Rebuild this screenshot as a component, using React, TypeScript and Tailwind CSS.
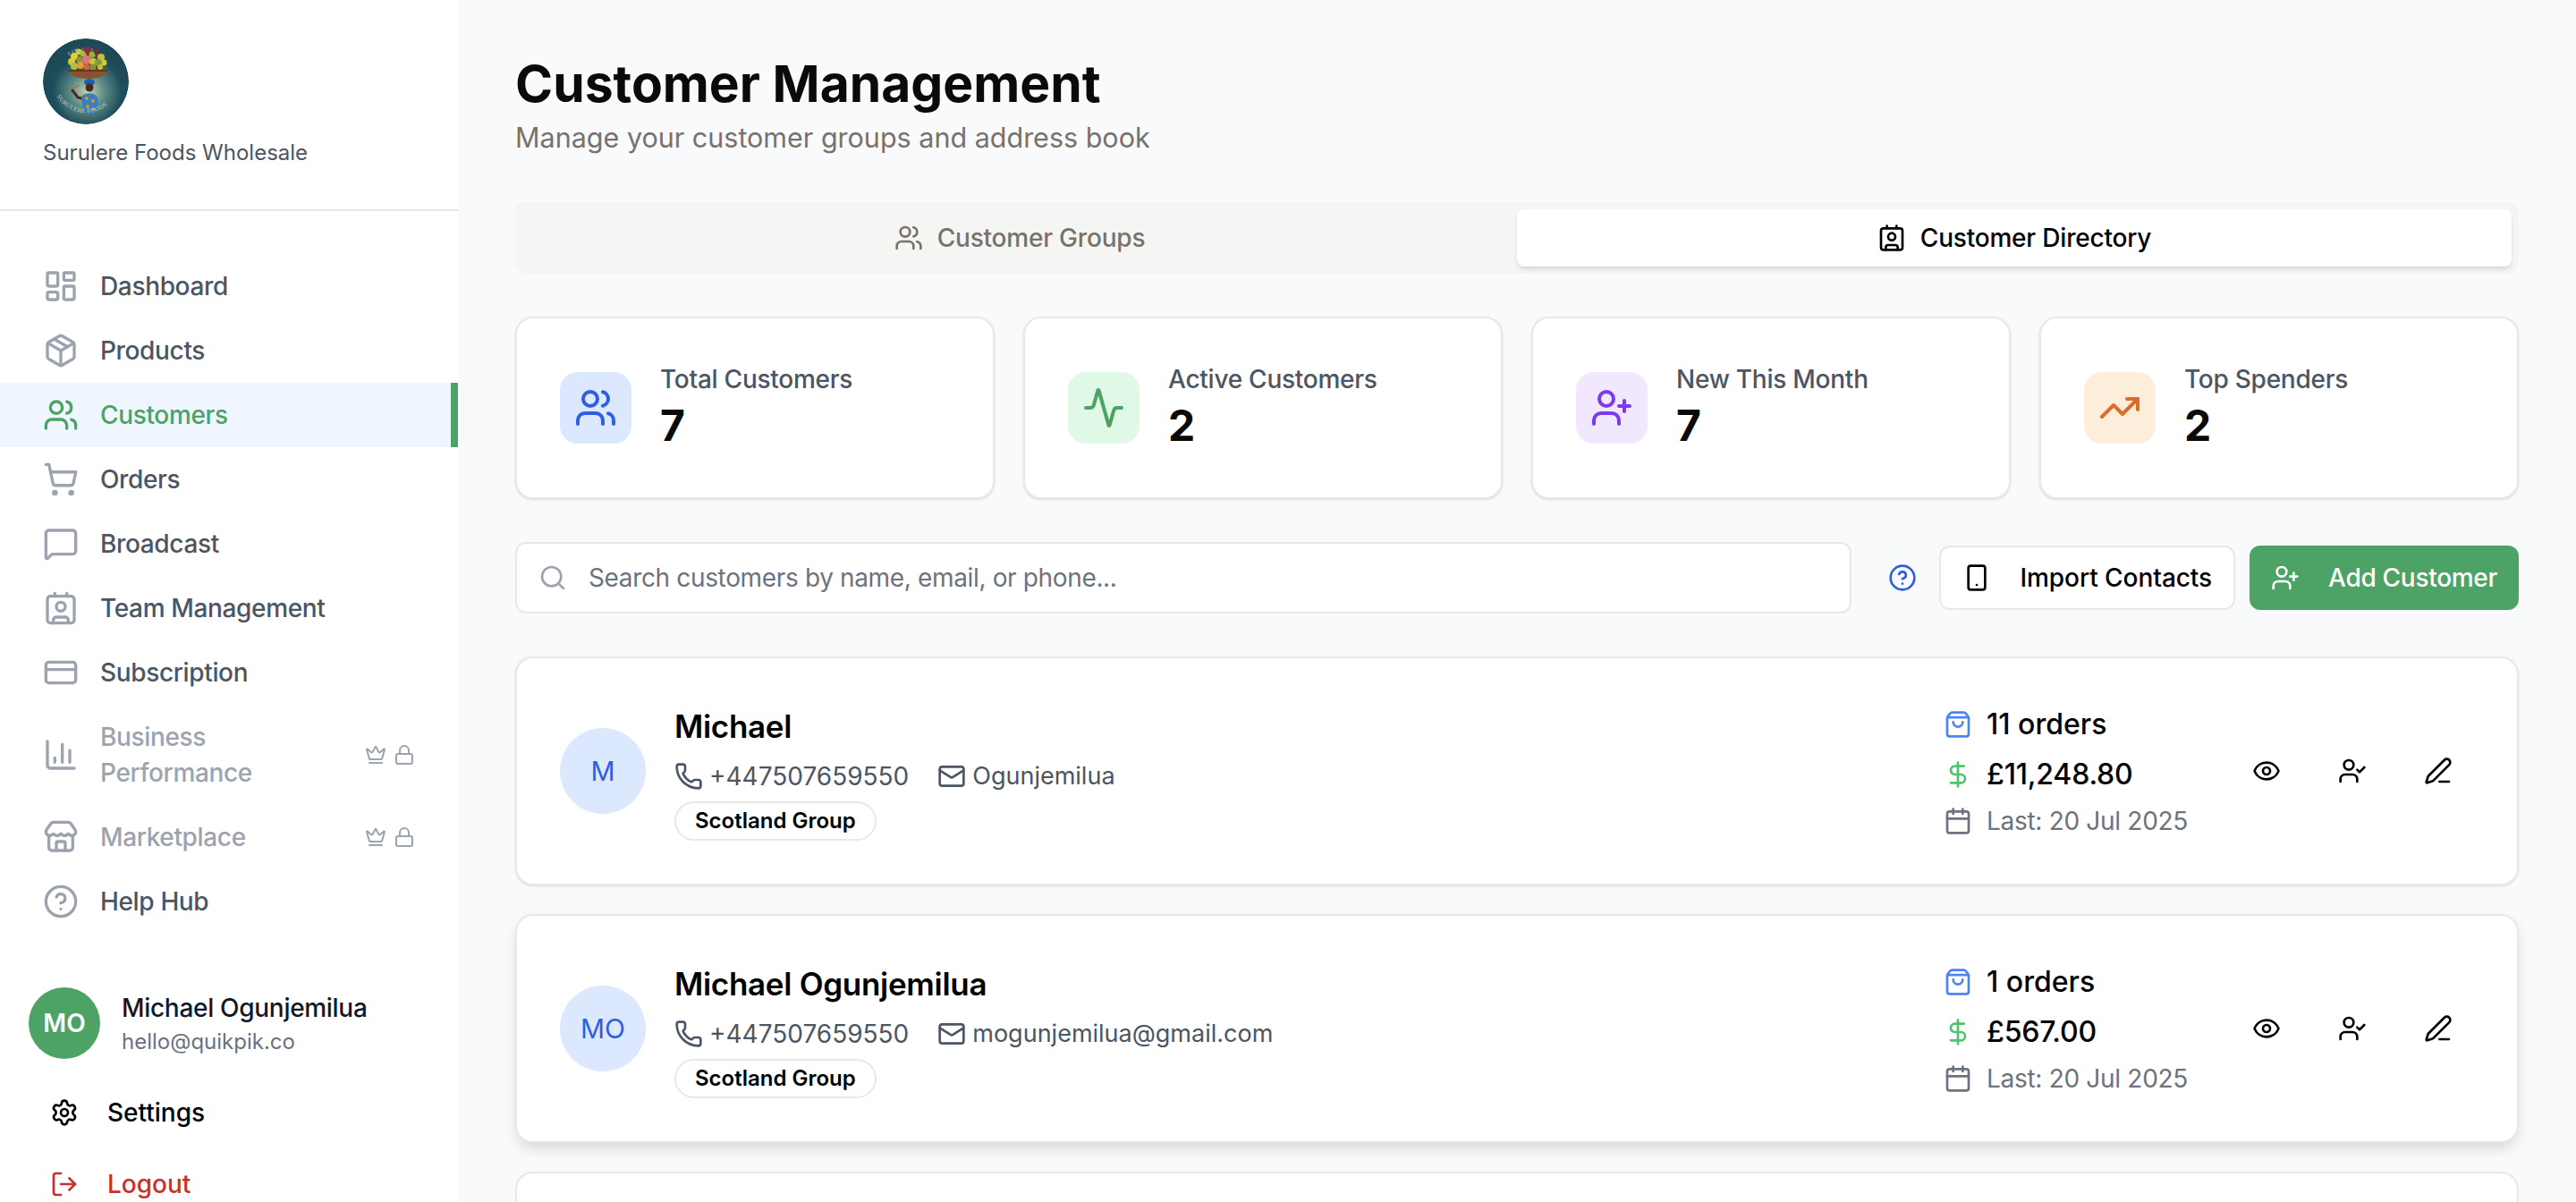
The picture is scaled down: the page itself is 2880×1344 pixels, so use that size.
import {
  Activity,
  Calendar,
  ChartColumn,
  CircleHelp,
  Contact,
  CreditCard,
  Crown,
  DollarSign,
  Eye,
  LayoutDashboard,
  Lock,
  LogOut,
  Mail,
  MessageSquare,
  Package,
  PenLine,
  Phone,
  Search,
  Settings,
  ShoppingBag,
  ShoppingCart,
  Smartphone,
  Store,
  TrendingUp,
  UserCheck,
  UserPlus,
  Users,
} from "lucide-react";

function Logo() {
  const fruit = [
    [32, 26, 4, "#d8c92f"],
    [35, 20, 4, "#e4cf3a"],
    [40, 15, 3.5, "#d6c63a"],
    [45, 17, 3.5, "#a9b93c"],
    [50, 13, 4, "#8c2f3c"],
    [55, 18, 3.5, "#9ab53c"],
    [60, 15, 3, "#7a2a3a"],
    [65, 21, 4, "#b9c83a"],
    [68, 27, 3.5, "#d6c63a"],
    [35, 31, 4, "#a9c23f"],
    [41, 24, 4, "#7f9c3f"],
    [42, 30, 4, "#e89a3a"],
    [49, 24, 5, "#e0757a"],
    [56, 26, 4, "#c8c040"],
    [62, 27, 4, "#7f9c3f"],
    [49, 32, 3.5, "#d8643a"],
    [56, 32, 3.5, "#8a8f38"],
    [64, 32, 3, "#d8b83a"],
  ] as const;
  return (
    <svg viewBox="0 0 96 96" className="w-24 h-24 rounded-full">
      <defs>
        <radialGradient id="logoGlow" cx="52%" cy="62%" r="50%">
          <stop offset="0%" stopColor="#c9d6ae" />
          <stop offset="40%" stopColor="#5b8a86" />
          <stop offset="80%" stopColor="#1f4e5a" />
          <stop offset="100%" stopColor="#1d4a56" />
        </radialGradient>
        <path id="logoTop" d="M23 24 A36 36 0 0 1 73 24" />
        <path id="logoBottom" d="M13 60 A38 38 0 0 0 83 60" />
      </defs>
      <circle cx="48" cy="48" r="48" fill="url(#logoGlow)" />
      <text fill="#b9cfc8" fontSize="5.5" fontFamily="Liberation Serif, serif" letterSpacing="0.5">
        <textPath href="#logoTop" startOffset="14%">EST. 2024</textPath>
      </text>
      <ellipse cx="49" cy="25" rx="20" ry="12" fill="#5d4a2a" />
      {fruit.map(([cx, cy, r, fill], i) => (
        <circle key={i} cx={cx} cy={cy} r={r} fill={fill} />
      ))}
      <path d="M29 35 H72 C70 42 63 45 50 45 C38 45 31 42 29 35 Z" fill="#8a5330" />
      <path d="M28 35 H73 V37 H28 Z" fill="#5c3a22" />
      <ellipse cx="52" cy="49" rx="6" ry="4" fill="#1f5fa8" />
      <circle cx="52" cy="55" r="4.5" fill="#4a2a20" />
      <path d="M33 58 L39 66 L47 68" fill="none" stroke="#4a2a20" strokeWidth="3" strokeLinecap="round" />
      <path d="M34 56 L41 52" stroke="#a5763f" strokeWidth="1.6" />
      <path d="M43 65 C47 60 58 60 61 66 C64 72 60 80 57 84 H47 C45 78 43 72 43 65 Z" fill="#3a7fb8" />
      <circle cx="49" cy="67" r="1.8" fill="#e89a3a" />
      <circle cx="56" cy="70" r="1.8" fill="#e89a3a" />
      <circle cx="50" cy="76" r="1.8" fill="#e89a3a" />
      <circle cx="56" cy="79" r="1.6" fill="#e89a3a" />
      <text fill="#b9cfc8" fontSize="7" fontFamily="Liberation Serif, serif" letterSpacing="0.3">
        <textPath href="#logoBottom" startOffset="6%">SURULERE FOODS</textPath>
      </text>
    </svg>
  );
}

const navTop = [
  { label: "Dashboard", icon: LayoutDashboard },
  { label: "Products", icon: Package },
  { label: "Customers", icon: Users, active: true },
  { label: "Orders", icon: ShoppingCart },
  { label: "Broadcast", icon: MessageSquare },
  { label: "Team Management", icon: Contact },
  { label: "Subscription", icon: CreditCard },
  { label: "Business Performance", icon: ChartColumn, locked: true },
  { label: "Marketplace", icon: Store, locked: true },
  { label: "Help Hub", icon: CircleHelp },
];

function Sidebar() {
  return (
    <aside className="w-[512px] h-screen shrink-0 bg-white flex flex-col overflow-hidden">
      <div className="h-[236px] shrink-0 border-b-2 border-[#e5e7eb] pl-12 pt-[43px]">
        <Logo />
        <p className="mt-4 text-[24px] leading-[32px] text-[#4b5563]">Surulere Foods Wholesale</p>
      </div>
      <nav className="pt-12 shrink-0">
        {navTop.map((item) => (
          <div
            key={item.label}
            className={`flex items-center gap-6 pl-12 pr-12 py-4 text-[28px] leading-[40px] font-medium tracking-[-0.35px] ${
              item.active
                ? "bg-[#eff6ff] text-[#4ca365] border-r-8 border-[#4ca365]"
                : item.locked
                  ? "text-[#9ca3af]"
                  : "text-[#4b5563]"
            }`}
          >
            <item.icon className={`w-10 h-10 shrink-0 ${item.active ? "text-[#4ca365]" : "text-[#9ca3af]"}`} />
            <span className="flex-1">{item.label}</span>
            {item.locked && (
              <div className="flex items-center gap-2 text-[#9ca3af]">
                <Crown className="w-6 h-6" />
                <Lock className="w-6 h-6" />
              </div>
            )}
          </div>
        ))}
      </nav>
      <div className="shrink-0 pt-[60px]">
        <div className="flex items-center gap-6 pl-8">
          <div className="w-20 h-20 rounded-full bg-[#4ca365] text-white flex items-center justify-center text-[28px] font-semibold">
            MO
          </div>
          <div>
            <p className="text-[28px] leading-[40px] font-medium text-[#111827] tracking-[-0.3px]">Michael Ogunjemilua</p>
            <p className="text-[24px] leading-[32px] text-[#6b7280] mt-0.5">hello@quikpik.co</p>
          </div>
        </div>
        <div className="flex items-center gap-8 pl-14 py-5 mt-5 text-[28px] leading-[40px] font-medium text-black">
          <Settings className="w-8 h-8" />
          Settings
        </div>
        <div className="flex items-center gap-8 pl-14 py-5 text-[28px] leading-[40px] font-medium text-[#c9302c]">
          <LogOut className="w-8 h-8" />
          Logout
        </div>
      </div>
    </aside>
  );
}

const stats = [
  { label: "Total Customers", value: "7", icon: Users, box: "bg-[#dbe8fd]", color: "text-[#2f5fe0]" },
  { label: "Active Customers", value: "2", icon: Activity, box: "bg-[#e0f8e6]", color: "text-[#4ca365]" },
  { label: "New This Month", value: "7", icon: UserPlus, box: "bg-[#f1e8fd]", color: "text-[#7c3aed]" },
  { label: "Top Spenders", value: "2", icon: TrendingUp, box: "bg-[#fdeedc]", color: "text-[#dd6b2c]" },
];

const customers = [
  { initials: "M", name: "Michael", phone: "+447507659550", email: "Ogunjemilua", orders: "11 orders", total: "£11,248.80" },
  { initials: "MO", name: "Michael Ogunjemilua", phone: "+447507659550", email: "mogunjemilua@gmail.com", orders: "1 orders", total: "£567.00", hover: true },
];

function CustomerCard({ c }: { c: (typeof customers)[number] }) {
  return (
    <div
      className={`h-[256px] shrink-0 bg-white border-2 border-[#e8e8e8] rounded-[20px] p-12 flex items-center justify-between ${
        c.hover ? "shadow-[0_8px_16px_-2px_rgba(0,0,0,0.14)]" : "shadow-sm"
      }`}
    >
      <div className="flex items-center gap-8">
        <div className="w-24 h-24 rounded-full bg-[#dbe8fd] text-[#2f5fe0] flex items-center justify-center text-[30px]">
          {c.initials}
        </div>
        <div>
          <h3 className="text-[35px] leading-[56px] font-semibold text-black tracking-[-0.3px]">{c.name}</h3>
          <div className="mt-2 flex items-center gap-8 text-[28px] leading-[40px] text-[#4b5563]">
            <span className="flex items-center gap-[7px]">
              <Phone className="w-8 h-8" />
              {c.phone}
            </span>
            <span className="flex items-center gap-[7px] text-[27px]">
              <Mail className="w-8 h-8" />
              {c.email}
            </span>
          </div>
          <span className="mt-2 inline-block border-2 border-[#e8e8e8] rounded-full px-[21px] py-1 text-[24px] leading-[32px] font-semibold text-black">
            Scotland Group
          </span>
        </div>
      </div>
      <div className="flex items-center gap-12">
        <div className="flex flex-col gap-2">
          <div className="flex items-center gap-4 text-[32px] leading-[48px] font-medium text-black">
            <ShoppingBag className="w-8 h-8 text-[#4f83f1]" />
            {c.orders}
          </div>
          <div className="flex items-center gap-4 text-[32px] leading-[48px] font-medium text-black tracking-[-0.2px]">
            <DollarSign className="w-8 h-8 text-[#4fc36b]" />
            {c.total}
          </div>
          <div className="flex items-center gap-4 text-[28px] leading-[40px] text-[#6b7280] tracking-[-0.3px]">
            <Calendar className="w-8 h-8" />
            Last: 20 Jul 2025
          </div>
        </div>
        <div className="flex items-center gap-4 text-black">
          <button className="w-20 h-20 flex items-center justify-center">
            <Eye className="w-8 h-8" />
          </button>
          <button className="w-20 h-20 flex items-center justify-center">
            <UserCheck className="w-8 h-8" />
          </button>
          <button className="w-20 h-20 flex items-center justify-center">
            <PenLine className="w-8 h-8" />
          </button>
        </div>
      </div>
    </div>
  );
}

export default function App() {
  return (
    <div className="flex h-screen overflow-hidden bg-[#f9fafb] [font-family:Inter,sans-serif]">
      <Sidebar />
      <main className="flex-1 min-w-0 px-16 pt-16 overflow-hidden">
        <h1 className="text-[57px] leading-[60px] font-bold text-[#0c0a09]">Customer Management</h1>
        <p className="mt-[10px] text-[30.5px] leading-[40px] text-[#78716c]">Manage your customer groups and address book</p>

        <div className="mt-[52px] h-20 bg-[#f5f5f4] rounded-[12px] p-2 grid grid-cols-2 tracking-[-0.2px]">
          <div className="flex items-center justify-center gap-4 text-[28px] font-medium text-[#78716c]">
            <Users className="w-8 h-8" />
            Customer Groups
          </div>
          <div className="flex items-center justify-center gap-4 text-[28px] font-medium text-black bg-white rounded-[8px] shadow-md">
            <Contact className="w-8 h-8" />
            Customer Directory
          </div>
        </div>

        <div className="mt-12 grid grid-cols-4 gap-8">
          {stats.map((s) => (
            <div key={s.label} className="bg-white border-2 border-[#e8e8e8] rounded-[20px] shadow-sm p-12 flex items-center gap-8">
              <div className={`w-20 h-20 rounded-[20px] flex items-center justify-center ${s.box}`}>
                <s.icon className={`w-12 h-12 ${s.color}`} />
              </div>
              <div>
                <p className="text-[28px] leading-[40px] font-medium text-[#4b5563] tracking-[-0.25px]">{s.label}</p>
                <p className="text-[48px] leading-[64px] font-bold text-[#0c0a09]">{s.value}</p>
              </div>
            </div>
          ))}
        </div>

        <div className="mt-12 flex items-center gap-8">
          <div className="flex-1 h-20 bg-white border-2 border-[#e8e8e8] rounded-[12px] flex items-center gap-6 px-6">
            <Search className="w-8 h-8 text-[#9ca3af] shrink-0" />
            <input
              placeholder="Search customers by name, email, or phone..."
              className="flex-1 bg-transparent outline-none text-[28px] tracking-[-0.35px] placeholder:text-[#6b7280]"
            />
          </div>
          <div className="flex items-center gap-4">
            <div className="w-[50px] flex justify-center">
              <CircleHelp className="w-8 h-8 text-[#2f5fe0]" />
            </div>
            <button className="h-[72px] flex items-center gap-8 px-6 bg-white border-2 border-[#e8e8e8] rounded-[12px] text-[28px] font-medium text-black tracking-[-0.05px]">
              <Smartphone className="w-8 h-8" />
              Import Contacts
            </button>
            <button className="h-[72px] flex items-center gap-8 px-6 bg-[#4ca365] rounded-[12px] text-[28px] font-medium text-white tracking-[-0.3px]">
              <UserPlus className="w-8 h-8" />
              Add Customer
            </button>
          </div>
        </div>

        <div className="mt-12 flex flex-col gap-8">
          {customers.map((c) => (
            <CustomerCard key={c.name} c={c} />
          ))}
          <div className="h-[256px] shrink-0 bg-white border-2 border-[#e8e8e8] rounded-[20px]" />
        </div>
      </main>
    </div>
  );
}
